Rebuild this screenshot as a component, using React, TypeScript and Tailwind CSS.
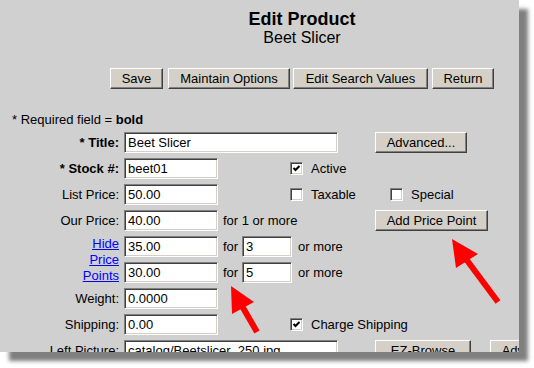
import React from 'react';

type BtnProps = { label: string; width: string };

const WinButton: React.FC<BtnProps> = ({ label, width }) => (
  <button
    type="button"
    className={`h-[21px] ${width} shrink-0 bg-[#d4d0c8] border border-t-white border-l-white border-r-[#404040] border-b-[#404040] shadow-[inset_-1px_-1px_0_#808080] text-[13px] leading-none text-black flex items-center justify-center whitespace-nowrap overflow-hidden`}
  >
    {label}
  </button>
);

const Field: React.FC<{ value: string; width: string }> = ({ value, width }) => (
  <input
    readOnly
    value={value}
    className={`h-[21px] ${width} shrink-0 bg-white border border-t-[#808080] border-l-[#808080] border-r-white border-b-white shadow-[inset_1px_1px_0_#404040,inset_-1px_-1px_0_#d4d0c8] pl-[3px] text-[13px] text-black outline-none`}
  />
);

const CheckBox: React.FC<{ checked?: boolean; label: string }> = ({ checked, label }) => (
  <label className="flex items-center gap-[8px] text-[13px]">
    <span className="w-[13px] h-[13px] shrink-0 bg-white border border-t-[#808080] border-l-[#808080] border-r-white border-b-white shadow-[inset_1px_1px_0_#404040,inset_-1px_-1px_0_#d4d0c8] flex items-center justify-center">
      {checked && (
        <svg width="9" height="9" viewBox="0 0 9 9">
          <path d="M1.5 4 L3.5 6 L7.5 2" fill="none" stroke="black" strokeWidth="2" />
        </svg>
      )}
    </span>
    {label}
  </label>
);

const Label: React.FC<{ children: React.ReactNode; bold?: boolean }> = ({ children, bold }) => (
  <span className={`w-[120px] shrink-0 text-right pr-px text-[13px] ${bold ? 'font-bold' : ''}`}>{children}</span>
);

const App: React.FC = () => {
  return (
    <div className="w-[534px] h-[368px] bg-white font-['Liberation_Sans',Arial,sans-serif] text-black">
      <div className="relative w-[519px] h-[352px] overflow-hidden bg-[#d0d0d0] shadow-[9px_9px_4px_rgba(0,0,0,0.5)]">
        <div className="w-[604px] pt-[9px] text-center">
          <h1 className="text-[18px] leading-[20px] font-bold">Edit Product</h1>
          <div className="text-[16px] leading-[18px]">Beet Slicer</div>
          <div className="mt-[21px] flex justify-center">
            <WinButton label="Save" width="w-[53px]" />
            <span className="ml-[5px]" />
            <WinButton label="Maintain Options" width="w-[122px]" />
            <span className="ml-[3px]" />
            <WinButton label="Edit Search Values" width="w-[135px]" />
            <span className="ml-[4px]" />
            <WinButton label="Return" width="w-[62px]" />
          </div>
        </div>

        <p className="mt-[23px] pl-[12px] text-[13px] leading-[15px]">
          * Required field = <b>bold</b>
        </p>

        <div className="mt-[5px] flex flex-col gap-[5px] text-[13px] leading-[15px] whitespace-nowrap">
          <div className="flex items-center h-[21px]">
            <Label bold>* Title:</Label>
            <span className="ml-[4px]" />
            <Field value="Beet Slicer" width="w-[214px]" />
            <span className="ml-[37px]" />
            <WinButton label="Advanced..." width="w-[92px]" />
          </div>

          <div className="flex items-center h-[21px]">
            <Label bold>* Stock #:</Label>
            <span className="ml-[4px]" />
            <Field value="beet01" width="w-[94px]" />
            <span className="ml-[72px]" />
            <CheckBox checked label="Active" />
          </div>

          <div className="flex items-center h-[21px]">
            <Label>List Price:</Label>
            <span className="ml-[4px]" />
            <Field value="50.00" width="w-[94px]" />
            <span className="ml-[72px]" />
            <div className="w-[100px]">
              <CheckBox label="Taxable" />
            </div>
            <CheckBox label="Special" />
          </div>

          <div className="flex items-center h-[21px]">
            <Label>Our Price:</Label>
            <span className="ml-[4px]" />
            <Field value="40.00" width="w-[94px]" />
            <span className="ml-[5px] w-[152px]">for 1 or more</span>
            <WinButton label="Add Price Point" width="w-[113px]" />
          </div>

          <div className="flex h-[47px]">
            <div className="w-[120px] shrink-0 pr-px flex flex-col justify-center text-right leading-[16px] text-[#0000ff] underline">
              <a href="#">Hide</a>
              <a href="#">Price</a>
              <a href="#">Points</a>
            </div>
            <div className="ml-[4px] flex flex-col gap-[5px]">
              {['35.00', '30.00'].map((price, i) => (
                <div key={price} className="flex items-center h-[21px]">
                  <Field value={price} width="w-[94px]" />
                  <span className="ml-[5px] w-[19px]">for</span>
                  <Field value={i === 0 ? '3' : '5'} width="w-[50px]" />
                  <span className="ml-[6px]">or more</span>
                </div>
              ))}
            </div>
          </div>

          <div className="flex items-center h-[21px]">
            <Label>Weight:</Label>
            <span className="ml-[4px]" />
            <Field value="0.0000" width="w-[94px]" />
          </div>

          <div className="flex items-center h-[21px]">
            <Label>Shipping:</Label>
            <span className="ml-[4px]" />
            <Field value="0.00" width="w-[94px]" />
            <span className="ml-[72px]" />
            <CheckBox checked label="Charge Shipping" />
          </div>

          <div className="flex items-center h-[21px]">
            <Label>Left Picture:</Label>
            <span className="ml-[4px]" />
            <Field value="catalog/Beetslicer_250.jpg" width="w-[214px]" />
            <span className="ml-[37px]" />
            <WinButton label="EZ-Browse" width="w-[96px]" />
            <span className="ml-[19px]" />
            <WinButton label="Advanced..." width="w-[92px]" />
          </div>
        </div>

        {/* red callout arrows drawn over the form */}
        <svg className="absolute left-0 top-0 pointer-events-none" width="519" height="352" viewBox="0 0 519 352">
          <polygon points="452,239 478,254 456,268" fill="#ff0000" />
          <line x1="466" y1="259" x2="498" y2="302" stroke="#ff0000" strokeWidth="6" />
          <polygon points="231,286 254,302 232,314" fill="#ff0000" />
          <line x1="242" y1="306" x2="257" y2="332" stroke="#ff0000" strokeWidth="6" />
        </svg>
      </div>
    </div>
  );
};

export default App;
